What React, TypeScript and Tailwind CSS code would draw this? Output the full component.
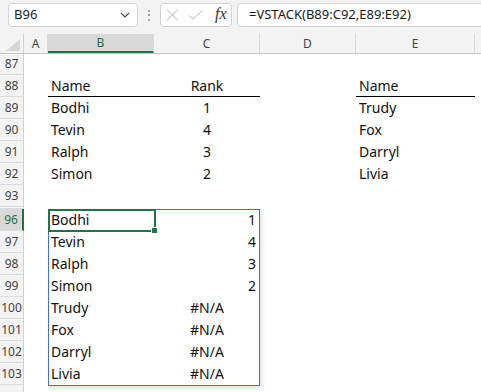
import React from "react";

type Cell = { t?: string; a?: "l" | "c" | "r"; u?: boolean } | null;

const W = [24, 106, 106, 96, 119];

function CellView({ c, w }: { c: Cell; w: number }) {
  const align =
    c?.a === "c" ? "justify-center" : c?.a === "r" ? "justify-end pr-[4px]" : "justify-start pl-[3px]";
  return (
    <div
      className={`h-full flex items-center shrink-0 ${align} ${c?.u ? "border-b border-black" : ""}`}
      style={{ width: w }}
    >
      {c?.t ? <span className="text-[14px] leading-[22px] text-[#111] whitespace-nowrap">{c.t}</span> : null}
    </div>
  );
}

function Row({ n, cells, h = 22, sel = false }: { n?: number; cells: Cell[]; h?: number; sel?: boolean }) {
  return (
    <div className="flex" style={{ height: h }}>
      <div
        className={`w-[24px] shrink-0 flex items-center justify-center text-[12px] leading-[22px] border-b border-[#dcdcdc] ${
          sel
            ? "bg-[#d9d9d9] text-[#217346] border-r-2 border-r-[#217346]"
            : "bg-[#f3f3f3] text-[#444] border-r border-r-[#d0d0d0]"
        }`}
      >
        {n}
      </div>
      {W.map((w, i) => (
        <CellView key={i} c={cells[i] ?? null} w={w} />
      ))}
    </div>
  );
}

export default function App() {
  const top: { n: number; cells: Cell[]; h?: number }[] = [
    { n: 87, cells: [], h: 21 },
    { n: 88, cells: [null, { t: "Name", u: true }, { t: "Rank", a: "c", u: true }, null, { t: "Name", u: true }] },
    { n: 89, cells: [null, { t: "Bodhi" }, { t: "1", a: "c" }, null, { t: "Trudy" }] },
    { n: 90, cells: [null, { t: "Tevin" }, { t: "4", a: "c" }, null, { t: "Fox" }] },
    { n: 91, cells: [null, { t: "Ralph" }, { t: "3", a: "c" }, null, { t: "Darryl" }] },
    { n: 92, cells: [null, { t: "Simon" }, { t: "2", a: "c" }, null, { t: "Livia" }] },
    { n: 93, cells: [] },
  ];
  const spill: { n: number; cells: Cell[] }[] = [
    { n: 96, cells: [null, { t: "Bodhi" }, { t: "1", a: "r" }] },
    { n: 97, cells: [null, { t: "Tevin" }, { t: "4", a: "r" }] },
    { n: 98, cells: [null, { t: "Ralph" }, { t: "3", a: "r" }] },
    { n: 99, cells: [null, { t: "Simon" }, { t: "2", a: "r" }] },
    { n: 100, cells: [null, { t: "Trudy" }, { t: "#N/A", a: "c" }] },
    { n: 101, cells: [null, { t: "Fox" }, { t: "#N/A", a: "c" }] },
    { n: 102, cells: [null, { t: "Darryl" }, { t: "#N/A", a: "c" }] },
    { n: 103, cells: [null, { t: "Livia" }, { t: "#N/A", a: "c" }] },
  ];

  return (
    <div className="w-[481px] h-[392px] overflow-hidden bg-white font-['Noto_Sans',sans-serif]">
      {/* Formula bar */}
      <div className="h-[34px] bg-[#f3f3f3] flex items-start pt-[3px] pl-[8px] overflow-hidden">
        <div className="w-[130px] h-[24px] shrink-0 bg-white border border-[#d1d1d1] rounded-[4px] flex items-center justify-between pl-[5px] pr-[7px]">
          <span className="text-[13px] text-[#1a1a1a]">B96</span>
          <svg width="10" height="6" viewBox="0 0 10 6">
            <path d="M1 1 L5 5 L9 1" fill="none" stroke="#444" strokeWidth="1.1" />
          </svg>
        </div>
        <div className="w-[22px] h-[24px] shrink-0 flex flex-col items-center justify-center gap-[2.5px]">
          <div className="w-[2px] h-[2px] rounded-full bg-[#888]" />
          <div className="w-[2px] h-[2px] rounded-full bg-[#888]" />
          <div className="w-[2px] h-[2px] rounded-full bg-[#888]" />
        </div>
        <div className="w-[72px] h-[24px] shrink-0 bg-white border border-[#d1d1d1] rounded-[4px] flex items-center pl-[5px]">
          <svg width="13" height="12" viewBox="0 0 13 12" className="shrink-0">
            <path d="M1 0.5 L12 11.5 M12 0.5 L1 11.5" stroke="#b4b4b4" strokeWidth="1" fill="none" />
          </svg>
          <svg width="15" height="10" viewBox="0 0 15 10" className="ml-[9px] shrink-0">
            <path d="M0.8 5.2 L5 9.2 L14.3 0.6" stroke="#b4b4b4" strokeWidth="1" fill="none" />
          </svg>
          <span className="ml-[12px] text-[16px] leading-none italic text-[#333] font-['Liberation_Serif',serif] -mt-[2px]">
            fx
          </span>
        </div>
        <div className="ml-[5px] w-[300px] h-[24px] shrink-0 bg-white border border-[#d1d1d1] rounded-[4px] flex items-center pl-[11px]">
          <span className="text-[13px] text-[#1a1a1a] whitespace-nowrap">=VSTACK(B89:C92,E89:E92)</span>
        </div>
      </div>

      {/* Column headers */}
      <div className="h-[20px] flex bg-[#f3f3f3] border-b border-[#c8c8c8]">
        <div className="w-[24px] shrink-0 border-r border-[#d0d0d0] relative">
          <svg width="14" height="12" viewBox="0 0 14 12" className="absolute right-[3px] bottom-[2px]">
            <polygon points="14,0 14,12 0,12" fill="#d6d6d6" />
          </svg>
        </div>
        {["A", "B", "C", "D", "E"].map((l, i) => (
          <div
            key={l}
            className={`shrink-0 flex items-center justify-center text-[12px] border-r border-r-[#dadada] ${
              l === "B" ? "bg-[#d9d9d9] text-[#217346] border-b-2 border-b-[#217346]" : "text-[#444]"
            }`}
            style={{ width: W[i] }}
          >
            {l}
          </div>
        ))}
      </div>

      {top.map((r) => (
        <Row key={r.n} n={r.n} cells={r.cells} h={r.h} />
      ))}
      <div className="flex h-[2px]">
        <div className="w-[24px] bg-[#f3f3f3] border-r border-[#d0d0d0] border-b border-b-[#dcdcdc]" />
      </div>

      <div className="relative">
        {spill.map((r) => (
          <Row key={r.n} n={r.n} cells={r.cells} sel={r.n === 96} />
        ))}
        <Row cells={[]} />
        <div className="absolute left-[48px] top-0 w-[212px] h-[177px] border border-[#4472c4] shadow-[2px_2px_4px_rgba(0,0,0,0.12)] pointer-events-none" />
        <div className="absolute left-[48px] top-0 w-[108px] h-[23px] border-2 border-[#217346] pointer-events-none" />
        <div className="absolute left-[151px] top-[18px] w-[7px] h-[7px] bg-[#217346] border border-white pointer-events-none" />
      </div>
    </div>
  );
}
